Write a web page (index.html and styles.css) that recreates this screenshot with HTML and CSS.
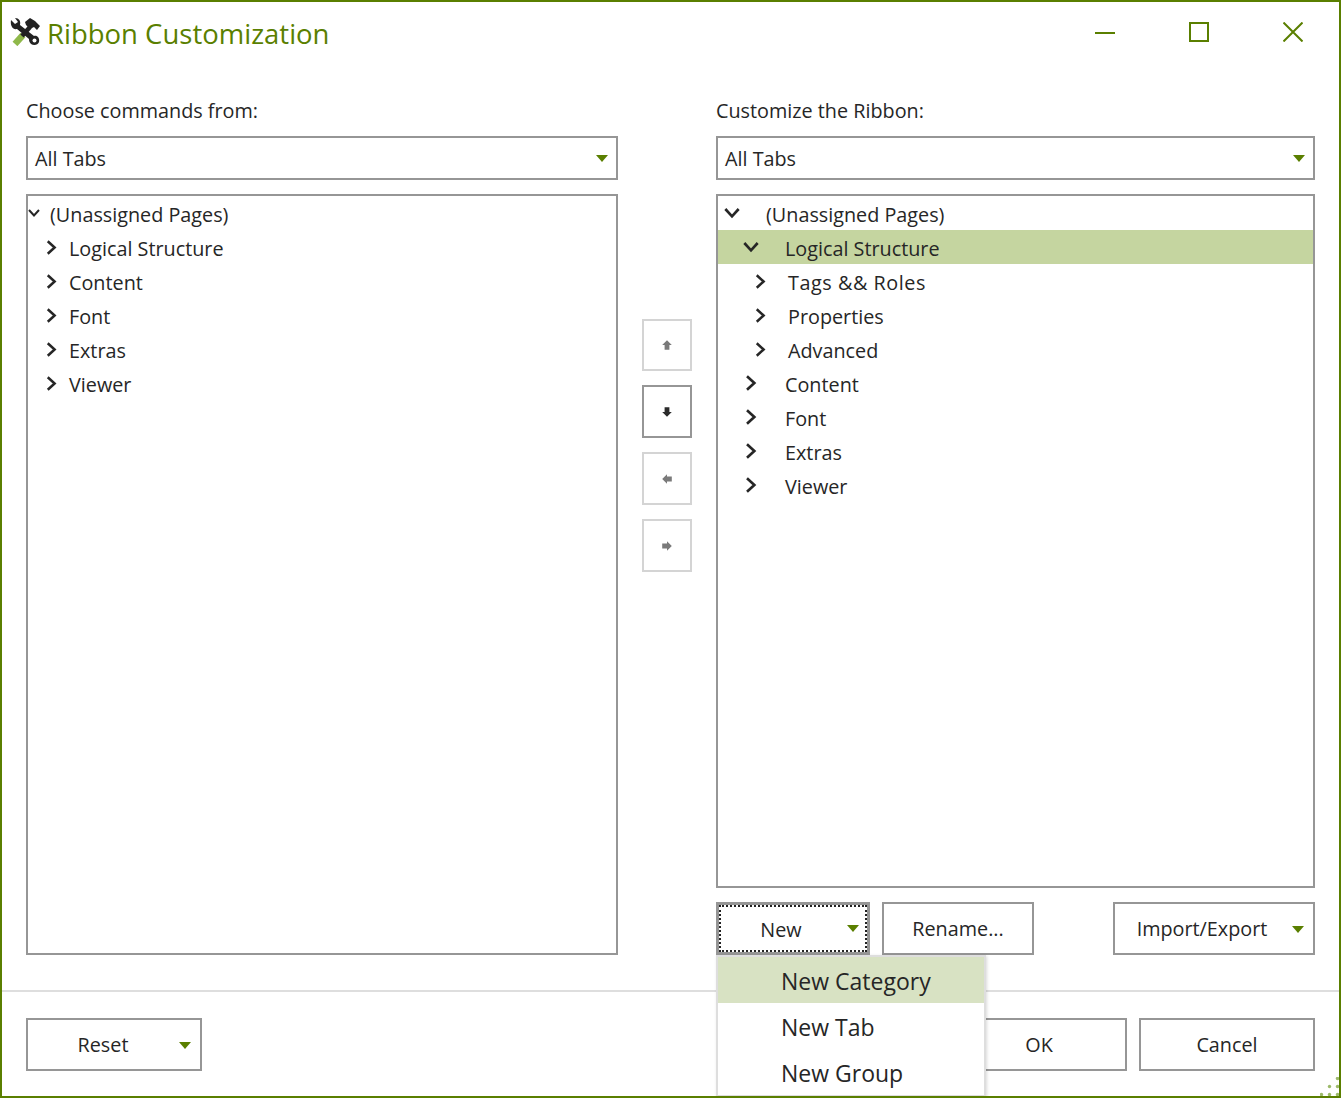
FILE: index.html
```html
<!DOCTYPE html>
<html lang="en">
<head>
<meta charset="utf-8">
<title>Ribbon Customization</title>
<link rel="stylesheet" href="styles.css">
</head>
<body>
<div class="window">
  <header class="titlebar">
    <svg class="app-icon" width="30" height="28" viewBox="0 0 30 28">
      <path d="M5 26 L13 17" stroke="#8fb84a" stroke-width="6.5" fill="none"/>
      <path d="M12 18 L20 9" stroke="#222" stroke-width="4.5" fill="none"/>
      <path d="M15 4 L20 0 L25 3 L30 8 L27 12 L24 9 L20 11 L16 7 Z" fill="#222"/>
      <path d="M1 2 L5 6 L8 4 L5 0 C9 0 11 3 10 7 L24 18 C27 17 30 20 29 24 C28 27 24 28 21 26 C19 24 19 22 19 21 L7 11 C3 12 0 8 1 2 Z" fill="#222"/>
      <circle cx="24.5" cy="22.5" r="2" fill="#fff"/>
    </svg>
    <h1 class="title">Ribbon Customization</h1>
    <div class="window-controls">
      <span class="win-btn"><svg width="20" height="20" viewBox="0 0 20 20"><rect x="0" y="10" width="20" height="2" fill="#5a7f00"/></svg></span>
      <span class="win-btn"><svg width="20" height="20" viewBox="0 0 20 20"><rect x="1" y="1" width="18" height="18" fill="none" stroke="#5a7f00" stroke-width="2"/></svg></span>
      <span class="win-btn"><svg width="20" height="20" viewBox="0 0 20 20"><path d="M0.5 0.5 L19.5 19.5 M19.5 0.5 L0.5 19.5" stroke="#5a7f00" stroke-width="2" fill="none"/></svg></span>
    </div>
  </header>

  <main class="content">
    <section class="column">
      <label class="field-label">Choose commands from:</label>
      <div class="combo"><span>All Tabs</span><i class="caret"></i></div>
      <div class="tree tree-left">
        <div class="row l-root"><svg class="chev" viewBox="0 0 12 12"><path d="M1 3 L6 8.5 L11 3"/></svg><span>(Unassigned Pages)</span></div>
        <div class="row l-item"><svg class="chev" viewBox="0 0 12 12"><path d="M3 1 L8.5 6 L3 11"/></svg><span>Logical Structure</span></div>
        <div class="row l-item"><svg class="chev" viewBox="0 0 12 12"><path d="M3 1 L8.5 6 L3 11"/></svg><span>Content</span></div>
        <div class="row l-item"><svg class="chev" viewBox="0 0 12 12"><path d="M3 1 L8.5 6 L3 11"/></svg><span>Font</span></div>
        <div class="row l-item"><svg class="chev" viewBox="0 0 12 12"><path d="M3 1 L8.5 6 L3 11"/></svg><span>Extras</span></div>
        <div class="row l-item"><svg class="chev" viewBox="0 0 12 12"><path d="M3 1 L8.5 6 L3 11"/></svg><span>Viewer</span></div>
      </div>
    </section>

    <section class="mover">
      <button class="move-btn"><svg width="12" height="12" viewBox="0 0 10 10"><path d="M5 1 L9 5 L7 5 L7 9 L3 9 L3 5 L1 5 Z" fill="#7a7a7a"/></svg></button>
      <button class="move-btn active"><svg width="12" height="12" viewBox="0 0 10 10"><path d="M3 1 L7 1 L7 5 L9 5 L5 9 L1 5 L3 5 Z" fill="#2b2b2b"/></svg></button>
      <button class="move-btn"><svg width="12" height="12" viewBox="0 0 10 10"><path d="M1 5 L5 1 L5 3 L9 3 L9 7 L5 7 L5 9 Z" fill="#7a7a7a"/></svg></button>
      <button class="move-btn"><svg width="12" height="12" viewBox="0 0 10 10"><path d="M9 5 L5 1 L5 3 L1 3 L1 7 L5 7 L5 9 Z" fill="#7a7a7a"/></svg></button>
    </section>

    <section class="column">
      <label class="field-label">Customize the Ribbon:</label>
      <div class="combo"><span>All Tabs</span><i class="caret"></i></div>
      <div class="tree tree-right">
        <div class="row r-root"><svg class="chev" viewBox="0 0 12 12"><path d="M1 3 L6 8.5 L11 3"/></svg><span>(Unassigned Pages)</span></div>
        <div class="row r-item selected"><svg class="chev" viewBox="0 0 12 12"><path d="M1 3 L6 8.5 L11 3"/></svg><span>Logical Structure</span></div>
        <div class="row r-sub"><svg class="chev" viewBox="0 0 12 12"><path d="M3 1 L8.5 6 L3 11"/></svg><span class="wide-text">Tags &amp;&amp; Roles</span></div>
        <div class="row r-sub"><svg class="chev" viewBox="0 0 12 12"><path d="M3 1 L8.5 6 L3 11"/></svg><span>Properties</span></div>
        <div class="row r-sub"><svg class="chev" viewBox="0 0 12 12"><path d="M3 1 L8.5 6 L3 11"/></svg><span>Advanced</span></div>
        <div class="row r-item"><svg class="chev" viewBox="0 0 12 12"><path d="M3 1 L8.5 6 L3 11"/></svg><span>Content</span></div>
        <div class="row r-item"><svg class="chev" viewBox="0 0 12 12"><path d="M3 1 L8.5 6 L3 11"/></svg><span>Font</span></div>
        <div class="row r-item"><svg class="chev" viewBox="0 0 12 12"><path d="M3 1 L8.5 6 L3 11"/></svg><span>Extras</span></div>
        <div class="row r-item"><svg class="chev" viewBox="0 0 12 12"><path d="M3 1 L8.5 6 L3 11"/></svg><span>Viewer</span></div>
      </div>
      <div class="tree-actions">
        <div class="new-wrap">
          <button class="btn btn-new focused"><span class="focus-ring"><span class="btn-label">New</span><i class="caret"></i></span></button>
          <div class="menu">
            <div class="menu-item hover">New Category</div>
            <div class="menu-item">New Tab</div>
            <div class="menu-item">New Group</div>
          </div>
        </div>
        <button class="btn btn-rename">Rename...</button>
        <button class="btn btn-import"><span class="btn-label">Import/Export</span><i class="caret"></i></button>
      </div>
    </section>
  </main>

  <footer class="footer">
    <button class="btn btn-wide btn-reset"><span class="btn-label">Reset</span><i class="caret"></i></button>
    <div class="footer-right">
      <button class="btn btn-wide">OK</button>
      <button class="btn btn-wide">Cancel</button>
    </div>
  </footer>

  <svg class="grip" width="20" height="20" viewBox="0 0 20 20">
    <g fill="#9dba6b">
      <circle cx="17.5" cy="1.5" r="1.7"/>
      <circle cx="9.5" cy="9.5" r="1.7"/><circle cx="17.5" cy="9.5" r="1.7"/>
      <circle cx="1.5" cy="17.5" r="1.7"/><circle cx="9.5" cy="17.5" r="1.7"/><circle cx="17.5" cy="17.5" r="1.7"/>
    </g>
  </svg>
</div>
</body>
</html>
```
FILE: styles.css
```css
* { box-sizing: border-box; }
html, body { margin: 0; padding: 0; background: #fff; }
body {
  font-family: "Open Sans", "Liberation Sans", sans-serif;
  font-size: 19.8px;
  color: #262626;
}
button { font: inherit; color: inherit; background: #fff; margin: 0; padding: 0; cursor: default; }

.window {
  position: relative;
  width: 1341px;
  height: 1098px;
  border: 2px solid #5a7f00;
  display: flex;
  flex-direction: column;
  overflow: hidden;
}

.titlebar { height: 62px; display: flex; align-items: center; padding-left: 9px; flex: none; }
.app-icon { flex: none; margin: -2px 0 0 -1px; }
.title { margin: 2px 0 0 7px; font-size: 27.5px; font-weight: 400; color: #5a7f00; line-height: 60px; }
.window-controls { margin-left: auto; margin-right: -1px; display: flex; align-self: flex-start; }
.win-btn { width: 94px; height: 60px; display: flex; align-items: center; justify-content: center; }

.content {
  flex: none;
  height: 891px;
  padding: 32px 24px 0;
  display: grid;
  grid-template-columns: 592px 98px 599px;
}
.column { display: flex; flex-direction: column; min-height: 0; }
.field-label { height: 30px; line-height: 30px; margin-bottom: 10px; }
.combo {
  height: 44px;
  border: 2px solid #969696;
  display: flex;
  align-items: center;
  justify-content: space-between;
  padding: 0 8px 0 7px;
  margin-bottom: 14px;
  flex: none;
}
.caret {
  display: block;
  flex: none;
  width: 0;
  height: 0;
  border-left: 6px solid transparent;
  border-right: 6px solid transparent;
  border-top: 7px solid #5a7f00;
}

.tree { flex: 1; min-height: 0; border: 2px solid #969696; }
.row { height: 34px; display: flex; align-items: center; position: relative; }
.row span { position: relative; top: 1px; }
.row span.wide-text { letter-spacing: 0.55px; }
.chev { width: 12px; height: 12px; flex: none; position: relative; top: 0; }
.chev path { fill: none; stroke: #262626; stroke-width: 2; }
.selected { background: #c5d5a0; }

.l-root { padding-left: 0; }
.l-root .chev { margin-right: 10px; }
.l-item { padding-left: 16px; }
.l-item .chev { width: 15px; height: 15px; margin-right: 10px; }
.r-root { padding-left: 6px; }
.r-root .chev { width: 16px; height: 16px; margin-right: 26px; }
.r-item { padding-left: 25px; }
.r-item .chev { width: 16px; height: 16px; margin-right: 26px; }
.r-sub { padding-left: 35px; }
.r-sub .chev { width: 15px; height: 15px; margin-right: 20px; }

.mover { display: flex; flex-direction: column; align-items: center; gap: 14px; padding-top: 223px; }
.move-btn {
  width: 50px;
  height: 53px;
  border: 2px solid #d4d4d4;
  display: flex;
  align-items: center;
  justify-content: center;
  flex: none;
}
.move-btn:first-child { height: 52px; }
.move-btn.active { border-color: #969696; }

.tree-actions { display: flex; gap: 12px; margin-top: 14px; flex: none; }
.btn {
  height: 53px;
  border: 2px solid #969696;
  display: flex;
  align-items: center;
  justify-content: center;
  position: relative;
  flex: none;
}
.btn .caret { position: absolute; right: 9px; top: 22px; }
.new-wrap { position: relative; flex: none; }
.btn-new { width: 154px; border-width: 3px; }
.focus-ring {
  display: flex;
  align-items: center;
  justify-content: center;
  width: 100%;
  height: 100%;
  border: 2px dotted #222;
  padding: 2px 24px 0 0;
}
.btn-new .caret { right: 8px; top: 20px; }
.btn-rename { width: 152px; }
.btn-import { width: 202px; margin-left: auto; padding-right: 24px; }
.btn-wide { width: 176px; }
.btn-reset { padding-right: 22px; }

.menu {
  position: absolute;
  z-index: 5;
  left: 0;
  top: 53px;
  width: 270px;
  height: 142px;
  background: #fff;
  border: 2px solid #dedede;
  box-shadow: 1px 1px 3px rgba(0, 0, 0, 0.15);
}
.menu-item { height: 46px; line-height: 49px; padding-left: 63px; font-size: 23px; }
.menu-item.hover { background: #d8e2c3; }

.footer {
  flex: 1;
  border-top: 2px solid #dedede;
  margin-top: 35px;
  padding: 26px 24px 0;
  display: flex;
  align-items: flex-start;
  justify-content: space-between;
}
.footer-right { display: flex; gap: 12px; }
.grip { position: absolute; right: -1px; bottom: -1px; }
```
